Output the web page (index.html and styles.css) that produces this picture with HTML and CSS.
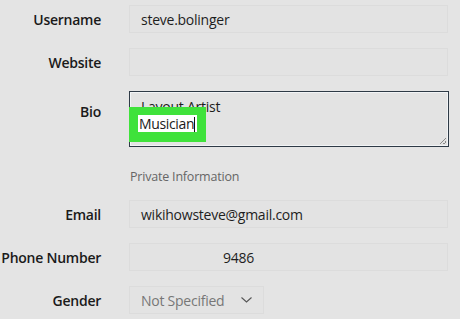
FILE: index.html
```html
<!DOCTYPE html>
<html>
<head>
<meta charset="utf-8">
<link rel="stylesheet" href="styles.css">
</head>
<body>
<form class="form">
  <label class="label">Username</label>
  <div class="field"><div class="input">steve.bolinger</div></div>

  <label class="label">Website</label>
  <div class="field"><div class="input"></div></div>

  <label class="label label-top">Bio</label>
  <div class="field bio-field">
    <div class="textarea">
      <div class="line">Layout Artist</div>
      <span class="grip"></span>
    </div>
    <div class="highlight"><span class="hl-text">Musician<span class="caret"></span></span></div>
  </div>

  <div class="label"></div>
  <div class="section">Private Information</div>

  <label class="label">Email</label>
  <div class="field"><div class="input">wikihowsteve@gmail.com</div></div>

  <label class="label">Phone Number</label>
  <div class="field"><div class="input phone">9486</div></div>

  <label class="label">Gender</label>
  <div class="field">
    <div class="select">
      <span class="placeholder">Not Specified</span>
      <svg class="chev" width="11" height="6" viewBox="0 0 11 6"><polyline points="0.5,0.5 5.5,5 10.5,0.5" fill="none" stroke="#555" stroke-width="1.1"/></svg>
    </div>
  </div>
</form>
</body>
</html>
```

FILE: styles.css
```css
html, body {
  margin: 0;
  padding: 0;
  background: #e4e4e4;
  font-family: "Open Sans", "Noto Sans", sans-serif;
  color: #1c1c1c;
}
.form {
  display: grid;
  grid-template-columns: 101px 319px;
  column-gap: 28px;
  row-gap: 15px;
  padding-top: 5px;
}
.label {
  font-weight: 600;
  font-size: 14px;
  letter-spacing: -0.25px;
  text-align: right;
  align-self: center;
  color: #1a1a1a;
  padding-top: 1px;
}
.label-top {
  align-self: start;
  padding-top: 11px;
}
.field {
  position: relative;
}
.input {
  box-sizing: border-box;
  height: 28px;
  border: 1px solid #dcdcdc;
  background: #e3e3e3;
  font-size: 14px;
  letter-spacing: -0.25px;
  line-height: 27px;
  padding-left: 11px;
  color: #1e1e1e;
}
.phone {
  padding-left: 93px;
}
.textarea {
  position: relative;
  box-sizing: border-box;
  height: 56px;
  width: 320px;
  border: 1px solid #2e3a46;
  box-shadow: inset 0 0 0 1px #f2f4f6;
  background: #e3e3e3;
  padding: 6px 0 0 11px;
  font-size: 14px;
  letter-spacing: -0.25px;
  line-height: 17px;
}
.grip {
  position: absolute;
  right: 2px;
  bottom: 2px;
  width: 6px;
  height: 6px;
  background: linear-gradient(135deg, transparent 45%, #8a8a8a 45%, #8a8a8a 55%, transparent 55%, transparent 75%, #8a8a8a 75%, #8a8a8a 85%, transparent 85%);
}
.highlight {
  position: absolute;
  left: 0;
  top: 16px;
  width: 77px;
  height: 35px;
  background: #3fe23b;
  box-sizing: border-box;
  padding: 8px 0 0 9px;
}
.hl-text {
  display: block;
  width: 59px;
  height: 17px;
  background: #ffffff;
  font-size: 14px;
  letter-spacing: -0.35px;
  line-height: 17px;
  padding-left: 1px;
  box-sizing: border-box;
  color: #1a1a1a;
  white-space: nowrap;
}
.caret {
  display: inline-block;
  width: 1px;
  height: 15px;
  background: #111;
  vertical-align: -3px;
}
.section {
  font-size: 12.5px;
  letter-spacing: -0.2px;
  color: #666;
  height: 23px;
  line-height: 23px;
  padding-left: 1px;
  padding-top: 3px;
  box-sizing: border-box;
}
.select {
  box-sizing: border-box;
  width: 135px;
  height: 28px;
  border: 1px solid #dcdcdc;
  background: #e3e3e3;
  display: flex;
  align-items: center;
  padding: 0 0 0 11px;
  font-size: 14px;
  letter-spacing: -0.25px;
  color: #777;
}
.chev {
  display: block;
  margin-left: 17px;
}
```
